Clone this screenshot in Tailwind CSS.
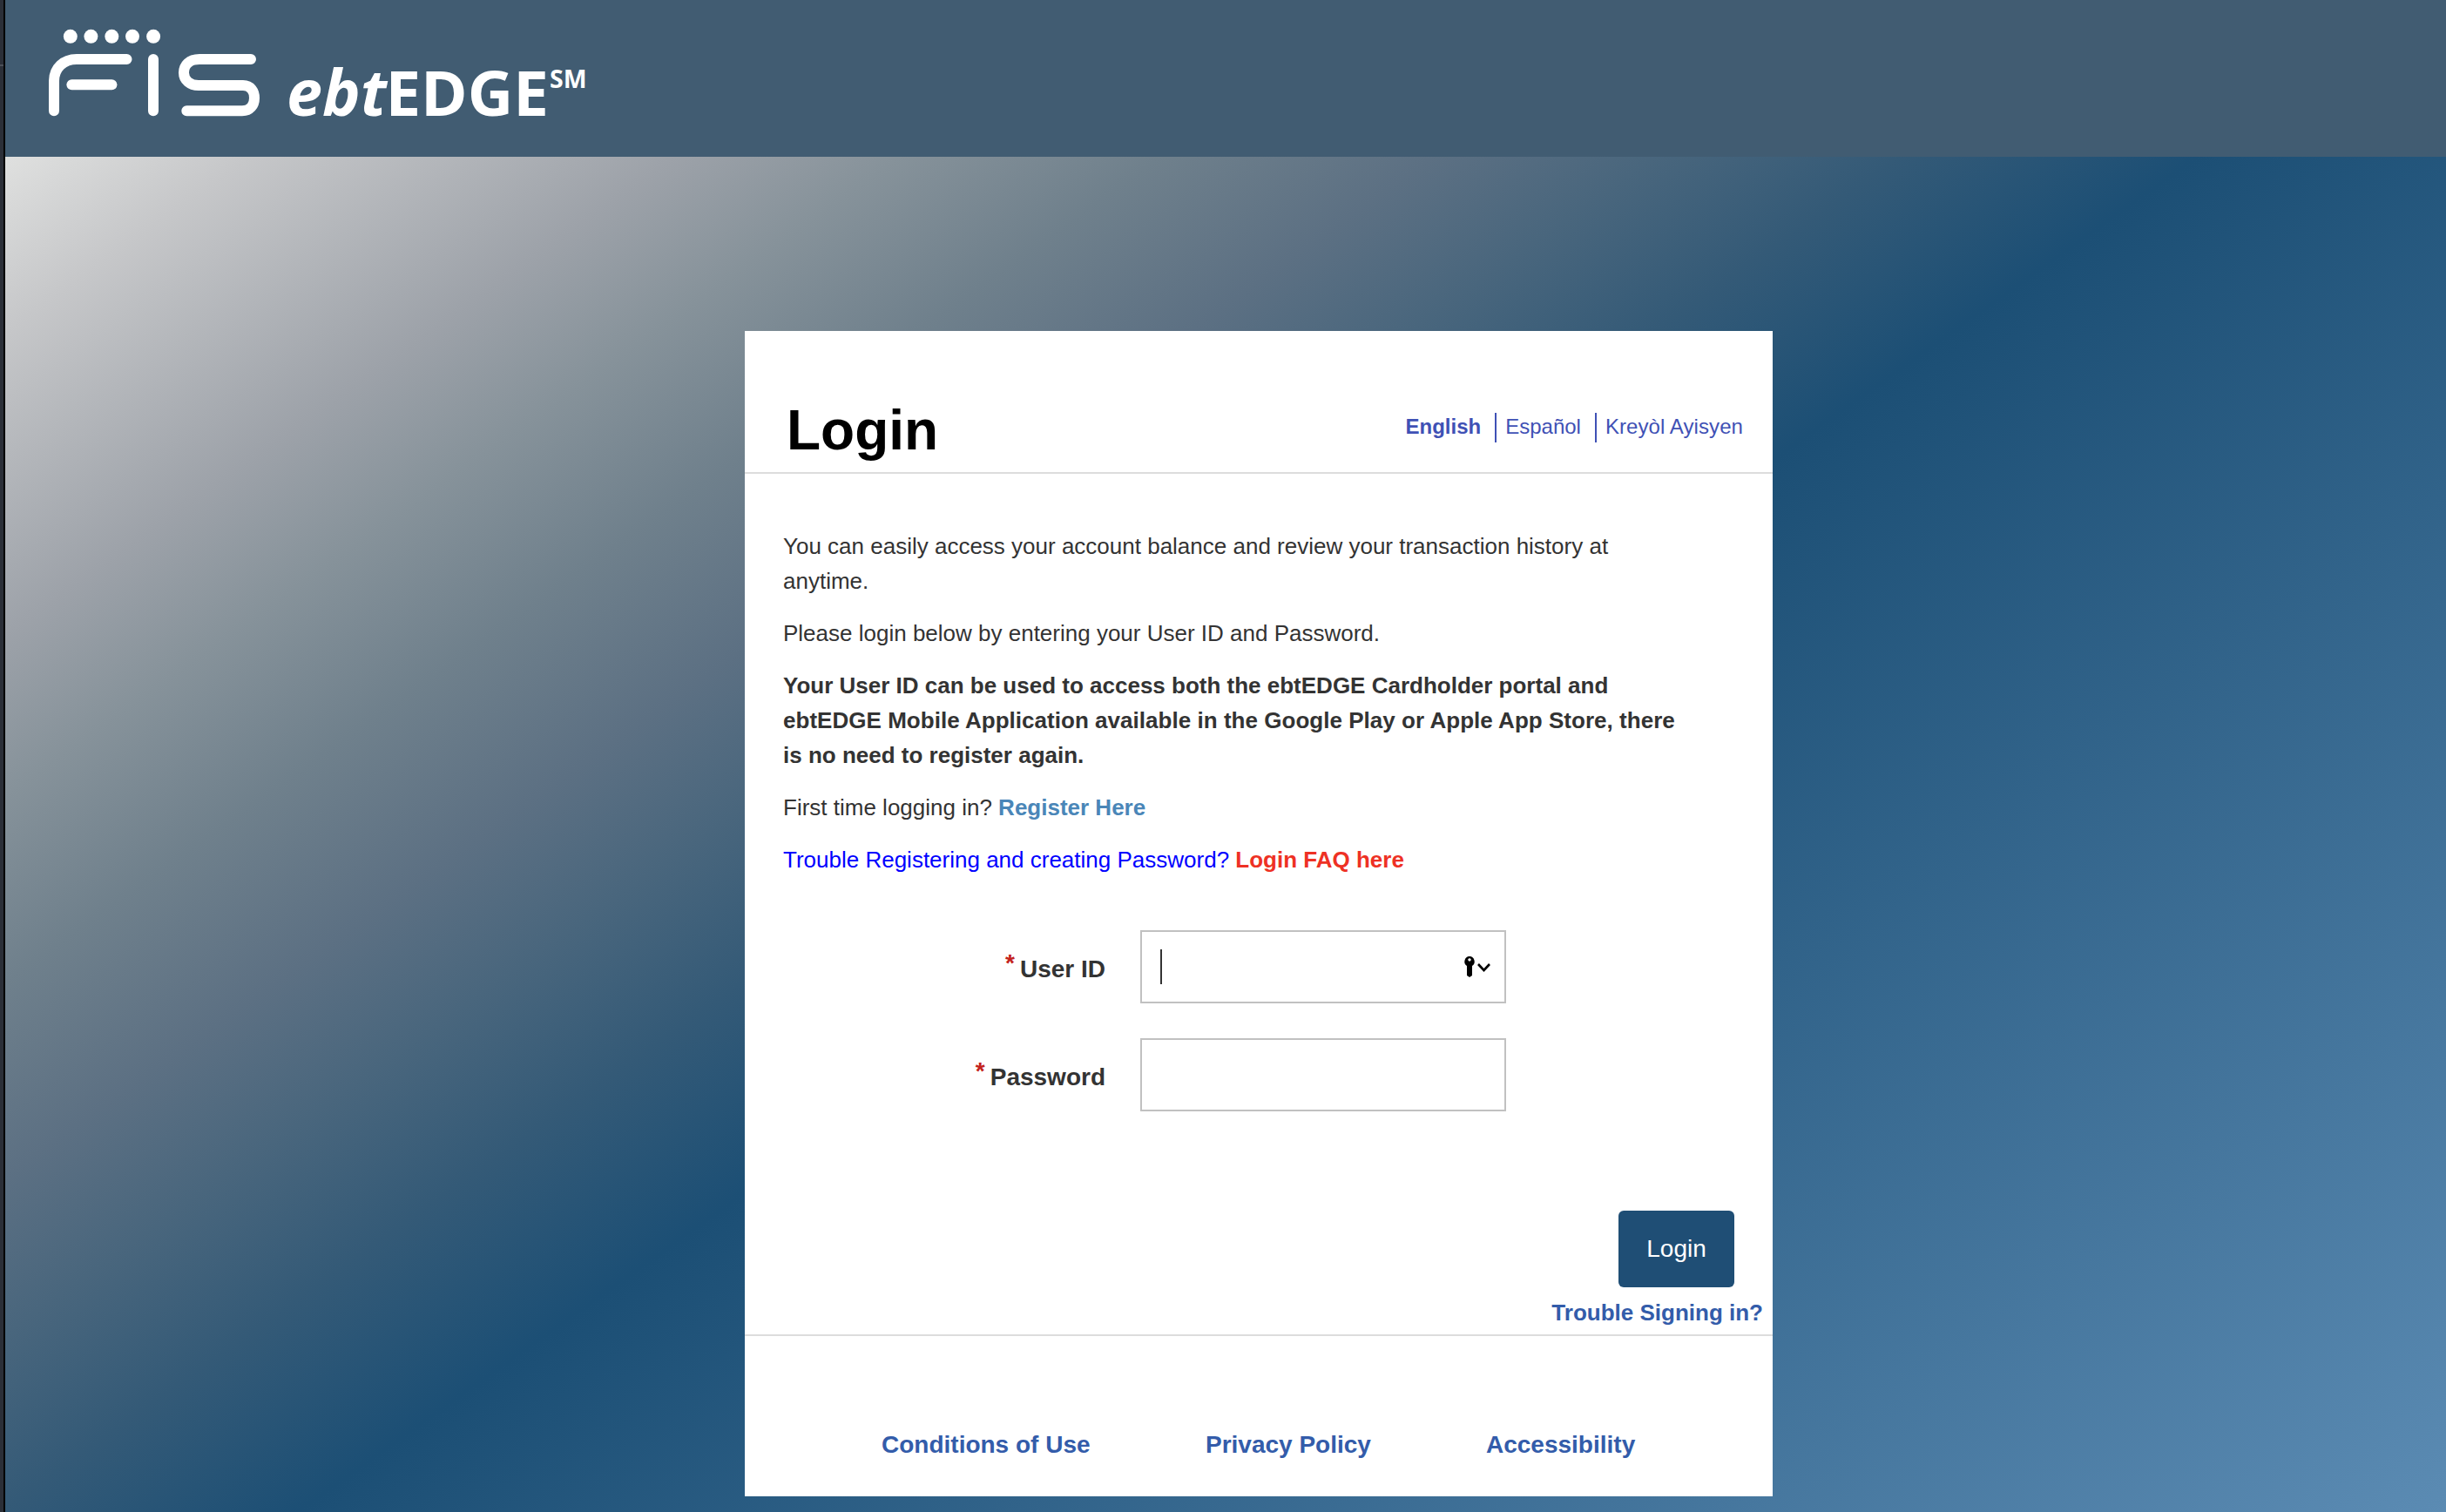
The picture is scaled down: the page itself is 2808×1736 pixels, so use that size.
<!DOCTYPE html>
<html lang="en">
<head>
<meta charset="utf-8">
<title>ebtEDGE Login</title>
<script src="https://cdn.jsdelivr.net/npm/@tailwindcss/browser@4"></script>
</head>
<body class="flex h-[1736px] w-[2808px] overflow-hidden font-['Liberation_Sans',Arial,sans-serif] text-[#333]">
<div class="flex w-[6px] shrink-0 flex-col border-r-2 border-black bg-[#2b2f38] pt-[74px]"><div class="h-[2px] bg-[#4c5058]"></div></div>
<div class="flex flex-1 flex-col">
<header class="h-[180px] shrink-0 bg-[#415c72]">
<svg class="block h-[180px] w-[720px]" viewBox="6 0 720 180" fill="#fff" role="img" aria-label="FIS ebtEDGE">
<circle cx="80.8" cy="41.8" r="8"/><circle cx="104.4" cy="41.8" r="8"/><circle cx="128.3" cy="41.8" r="8"/><circle cx="152" cy="41.8" r="8"/><circle cx="176.1" cy="41.8" r="8"/>
<g fill="none" stroke="#fff" stroke-width="12" stroke-linecap="round">
<path d="M62 127.3V93C62 78 73 68 88 68H145.5"/><path d="M82.4 97.3H128.4"/><path d="M176 68V127.3"/>
<path d="M288 68H229C217 68 211 75 211 83.500C211 92 218 98 228 98H279C288 98 292 105 292 112.500C292 121 287 127.300 278 127.300H214.300"/>
</g>
<g font-family="Open Sans, sans-serif" font-weight="700">
<text x="329" y="132.500" font-size="73.500" font-style="italic">ebt</text>
<text x="442.500" y="132.500" font-size="72.500">EDGE</text>
<text x="631" y="101" font-size="28.500">SM</text>
</g>
</svg>
</header>
<main class="flex flex-1 flex-col bg-[linear-gradient(144.5deg,#dfe0df_0%,#c6c7c9_5.6%,#9da2a9_15.4%,#86929a_20.6%,#6f808c_26.6%,#5c7083_32.9%,#49667d_38%,#345a77_43.6%,#1c4f75_50.5%,#5b8bb3_100%)] pt-[200px] pl-[849px]">
<section class="flex h-[1338px] w-[1180px] flex-col bg-white">
<div class="flex h-[164px] shrink-0 justify-between border-b-2 border-[#ddd] pr-[34px] pl-[48px]">
<h1 class="pt-[77px] text-[64px] leading-[74px] font-bold text-black">Login</h1>
<nav class="flex items-start pt-[94px] text-[24px] leading-[32px] text-[#3f51b5]">
<a class="h-[34px] pr-[16px] font-bold">English</a><a class="h-[34px] border-l-2 border-[#3f51b5] pr-[16px] pl-[10px]">Español</a><a class="h-[34px] border-l-2 border-[#3f51b5] pl-[10px] tracking-[0.08px]">Kreyòl Ayisyen</a>
</nav>
</div>
<div class="flex flex-col gap-[20px] pt-[63px] pl-[44px] text-[26px] leading-[40px]">
<p>You can easily access your account balance and review your transaction history at<br>anytime.</p>
<p>Please login below by entering your User ID and Password.</p>
<p class="font-bold">Your User ID can be used to access both the ebtEDGE Cardholder portal and<br><span class="tracking-[0.03px]">ebtEDGE Mobile Application available in the Google Play or Apple App Store, there</span><br>is no need to register again.</p>
<p>First time logging in? <a class="font-bold text-[#4a86b8]">Register Here</a></p>
<p class="text-[#0000ff]">Trouble Registering and creating Password? <a class="font-bold text-[#ee3124]">Login FAQ here</a></p>
</div>
<form class="mt-[61px] flex flex-col gap-[40px] text-[28px] font-bold">
<div class="flex h-[84px] items-center">
<label class="w-[414px] pt-[6px] text-right"><span class="relative -top-[7px] pr-[6px] text-[#c4231c]">*</span>User ID</label>
<div class="ml-[40px] flex h-[84px] w-[420px] items-center justify-between border-2 border-[#c1c1c1] pr-[16px] pl-[21px]">
<span class="h-[40px] w-[2px] bg-[#333]"></span>
<svg class="h-[26px] w-[32px]" viewBox="0 0 32 26"><path fill-rule="evenodd" d="M8 1a6 6 0 0 1 3 11V23L8 25 5 23V12A6 6 0 0 1 8 1ZM8 3.200a1.700 1.700 0 1 0 .01 0Z"/><path d="M18 10L24.500 17L31 10" fill="none" stroke="#000" stroke-width="2.600"/></svg>
</div>
</div>
<div class="flex h-[84px] items-center">
<label class="w-[414px] pt-[6px] text-right"><span class="relative -top-[7px] pr-[6px] text-[#c4231c]">*</span>Password</label>
<div class="ml-[40px] h-[84px] w-[420px] border-2 border-[#c1c1c1]"></div>
</div>
</form>
<div class="mt-[114px] flex flex-col items-end">
<button class="mr-[44px] h-[88px] w-[133px] rounded-[6px] bg-[#1f4e75] text-[28px] text-white">Login</button>
<a class="mt-[11px] mr-[11px] text-[26px] leading-[36px] font-bold text-[#335caa]">Trouble Signing in?</a>
</div>
<footer class="mt-[7px] flex border-t-2 border-[#ddd] pt-[107px] pl-[157px] text-[28px] leading-[36px] font-bold text-[#335caa]">
<a class="w-[372px]">Conditions of Use</a><a class="w-[322px]">Privacy Policy</a><a>Accessibility</a>
</footer>
</section>
</main>
</div>
</body>
</html>
